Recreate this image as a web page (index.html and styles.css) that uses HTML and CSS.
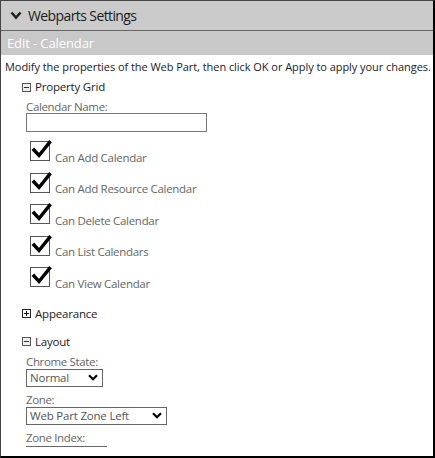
FILE: index.html
```html
<!DOCTYPE html>
<html>
<head>
<meta charset="utf-8">
<link rel="stylesheet" href="styles.css">
</head>
<body>
<div class="frame">
  <div class="header">
    <svg class="chev" width="12" height="9" viewBox="0 0 12 9"><polyline points="1.5,1.5 6,6.5 10.5,1.5" fill="none" stroke="#222" stroke-width="2.6"/></svg>
    <span>Webparts Settings</span>
  </div>
  <div class="editbar">Edit - Calendar</div>
  <div class="content">
    <p class="desc">Modify the properties of the Web Part, then click OK or Apply to apply your changes.</p>

    <div class="section">
      <div class="sec-title"><span class="tog minus"></span>Property Grid</div>
      <div class="sec-body">
        <div class="label">Calendar Name:</div>
        <div class="textbox"></div>
        <div class="checks">
          <div class="check"><span class="cb"><svg width="22" height="20" viewBox="0 0 22 20"><polyline points="3,10 8,15.5 18.5,2.5" fill="none" stroke="#000" stroke-width="3.4" stroke-linecap="square"/></svg></span><span class="clabel">Can Add Calendar</span></div>
          <div class="check"><span class="cb"><svg width="22" height="20" viewBox="0 0 22 20"><polyline points="3,10 8,15.5 18.5,2.5" fill="none" stroke="#000" stroke-width="3.4" stroke-linecap="square"/></svg></span><span class="clabel">Can Add Resource Calendar</span></div>
          <div class="check"><span class="cb"><svg width="22" height="20" viewBox="0 0 22 20"><polyline points="3,10 8,15.5 18.5,2.5" fill="none" stroke="#000" stroke-width="3.4" stroke-linecap="square"/></svg></span><span class="clabel">Can Delete Calendar</span></div>
          <div class="check"><span class="cb"><svg width="22" height="20" viewBox="0 0 22 20"><polyline points="3,10 8,15.5 18.5,2.5" fill="none" stroke="#000" stroke-width="3.4" stroke-linecap="square"/></svg></span><span class="clabel">Can List Calendars</span></div>
          <div class="check"><span class="cb"><svg width="22" height="20" viewBox="0 0 22 20"><polyline points="3,10 8,15.5 18.5,2.5" fill="none" stroke="#000" stroke-width="3.4" stroke-linecap="square"/></svg></span><span class="clabel">Can View Calendar</span></div>
        </div>
      </div>
    </div>

    <div class="section appearance">
      <div class="sec-title"><span class="tog plus"></span>Appearance</div>
    </div>

    <div class="section layout">
      <div class="sec-title"><span class="tog minus"></span>Layout</div>
      <div class="sec-body">
        <div class="label">Chrome State:</div>
        <div class="select w-normal"><span>Normal</span><svg width="10" height="7" viewBox="0 0 10 7"><polyline points="1,1.2 5,5.2 9,1.2" fill="none" stroke="#000" stroke-width="2.2"/></svg></div>
        <div class="label zone">Zone:</div>
        <div class="select w-zone"><span>Web Part Zone Left</span><svg width="10" height="7" viewBox="0 0 10 7"><polyline points="1,1.2 5,5.2 9,1.2" fill="none" stroke="#000" stroke-width="2.2"/></svg></div>
        <div class="label zone">Zone Index:</div>
        <div class="indexbox"></div>
      </div>
    </div>
  </div>
</div>
</body>
</html>
```

FILE: styles.css
```css
html, body {
  margin: 0;
  padding: 0;
  background: #fff;
}
.frame {
  width: 435px;
  height: 458px;
  box-sizing: border-box;
  border-top: 1px solid #444;
  border-left: 1px solid #444;
  border-right: 2px solid #000;
  border-bottom: 2px solid #000;
  overflow: hidden;
  font-family: "Open Sans", "Noto Sans", sans-serif;
  color: #222;
}
.header {
  height: 29px;
  background: #cbcbcb;
  border-bottom: 1px solid #666;
  display: flex;
  align-items: center;
  padding-left: 9px;
  font-size: 14px;
  color: #1c1c1c;
  letter-spacing: -0.6px;
}
.chev {
  margin-right: 6px;
}
.editbar {
  height: 24px;
  background: #c8c8c8;
  color: #fff;
  font-size: 13px;
  line-height: 24px;
  padding-left: 6px;
  letter-spacing: -0.1px;
}
.content {
  padding-left: 4px;
}
.desc {
  margin: 4px 0 0 0;
  font-size: 11px;
  line-height: 16px;
  color: #1a1a2a;
  letter-spacing: -0.05px;
  white-space: nowrap;
}
.section {
  padding-left: 17px;
}
.sec-title {
  display: flex;
  align-items: center;
  font-size: 11.5px;
  line-height: 16px;
  color: #222;
  margin-top: 4px;
  letter-spacing: -0.2px;
}
.tog {
  width: 7px;
  height: 7px;
  border: 1px solid #555;
  margin-right: 4px;
  position: relative;
  background: #eee;
}
.tog.minus::after {
  content: "";
  position: absolute;
  left: 1px;
  right: 1px;
  top: 3px;
  height: 1px;
  background: #333;
}
.tog.plus {
  border-color: #222;
  background: #fff;
}
.tog.plus::after {
  content: "";
  position: absolute;
  left: 1px;
  right: 1px;
  top: 3px;
  height: 1px;
  background: #111;
}
.tog.plus::before {
  content: "";
  position: absolute;
  top: 1px;
  bottom: 1px;
  left: 3px;
  width: 1px;
  background: #111;
}
.sec-body {
  padding-left: 4px;
}
.label {
  font-size: 11.5px;
  line-height: 14px;
  color: #666;
  margin-top: 5px;
  letter-spacing: -0.35px;
}
.textbox {
  width: 179px;
  height: 17px;
  border: 1px solid #777;
  margin-top: -1px;
}
.checks {
  margin-top: 9px;
  padding-left: 4px;
}
.check {
  display: flex;
  align-items: flex-end;
  height: 31.5px;
}
.cb {
  width: 18px;
  height: 18px;
  border: 1px solid #555;
  position: relative;
  flex: none;
  align-self: flex-start;
}
.cb svg {
  position: absolute;
  left: 0;
  top: -2px;
}
.clabel {
  font-size: 11.5px;
  color: #666;
  margin-left: 5px;
  line-height: 14px;
  padding-bottom: 8px;
  letter-spacing: -0.3px;
}
.appearance .sec-title {
  margin-top: 7px;
}
.layout .sec-title {
  margin-top: 12px;
}
.layout .label:first-child {
  margin-top: 5px;
}
.select {
  height: 16px;
  border: 1px solid #666;
  display: flex;
  align-items: center;
  justify-content: space-between;
  padding: 0 4px 0 3px;
  font-size: 11.5px;
  color: #555;
  letter-spacing: -0.2px;
}
.w-normal {
  width: 68px;
}
.w-zone {
  width: 132px;
}
.label.zone {
  margin-top: 6px;
}
.indexbox {
  width: 81px;
  height: 17px;
  border-top: 1px solid #666;
  margin-top: 1px;
}
```
